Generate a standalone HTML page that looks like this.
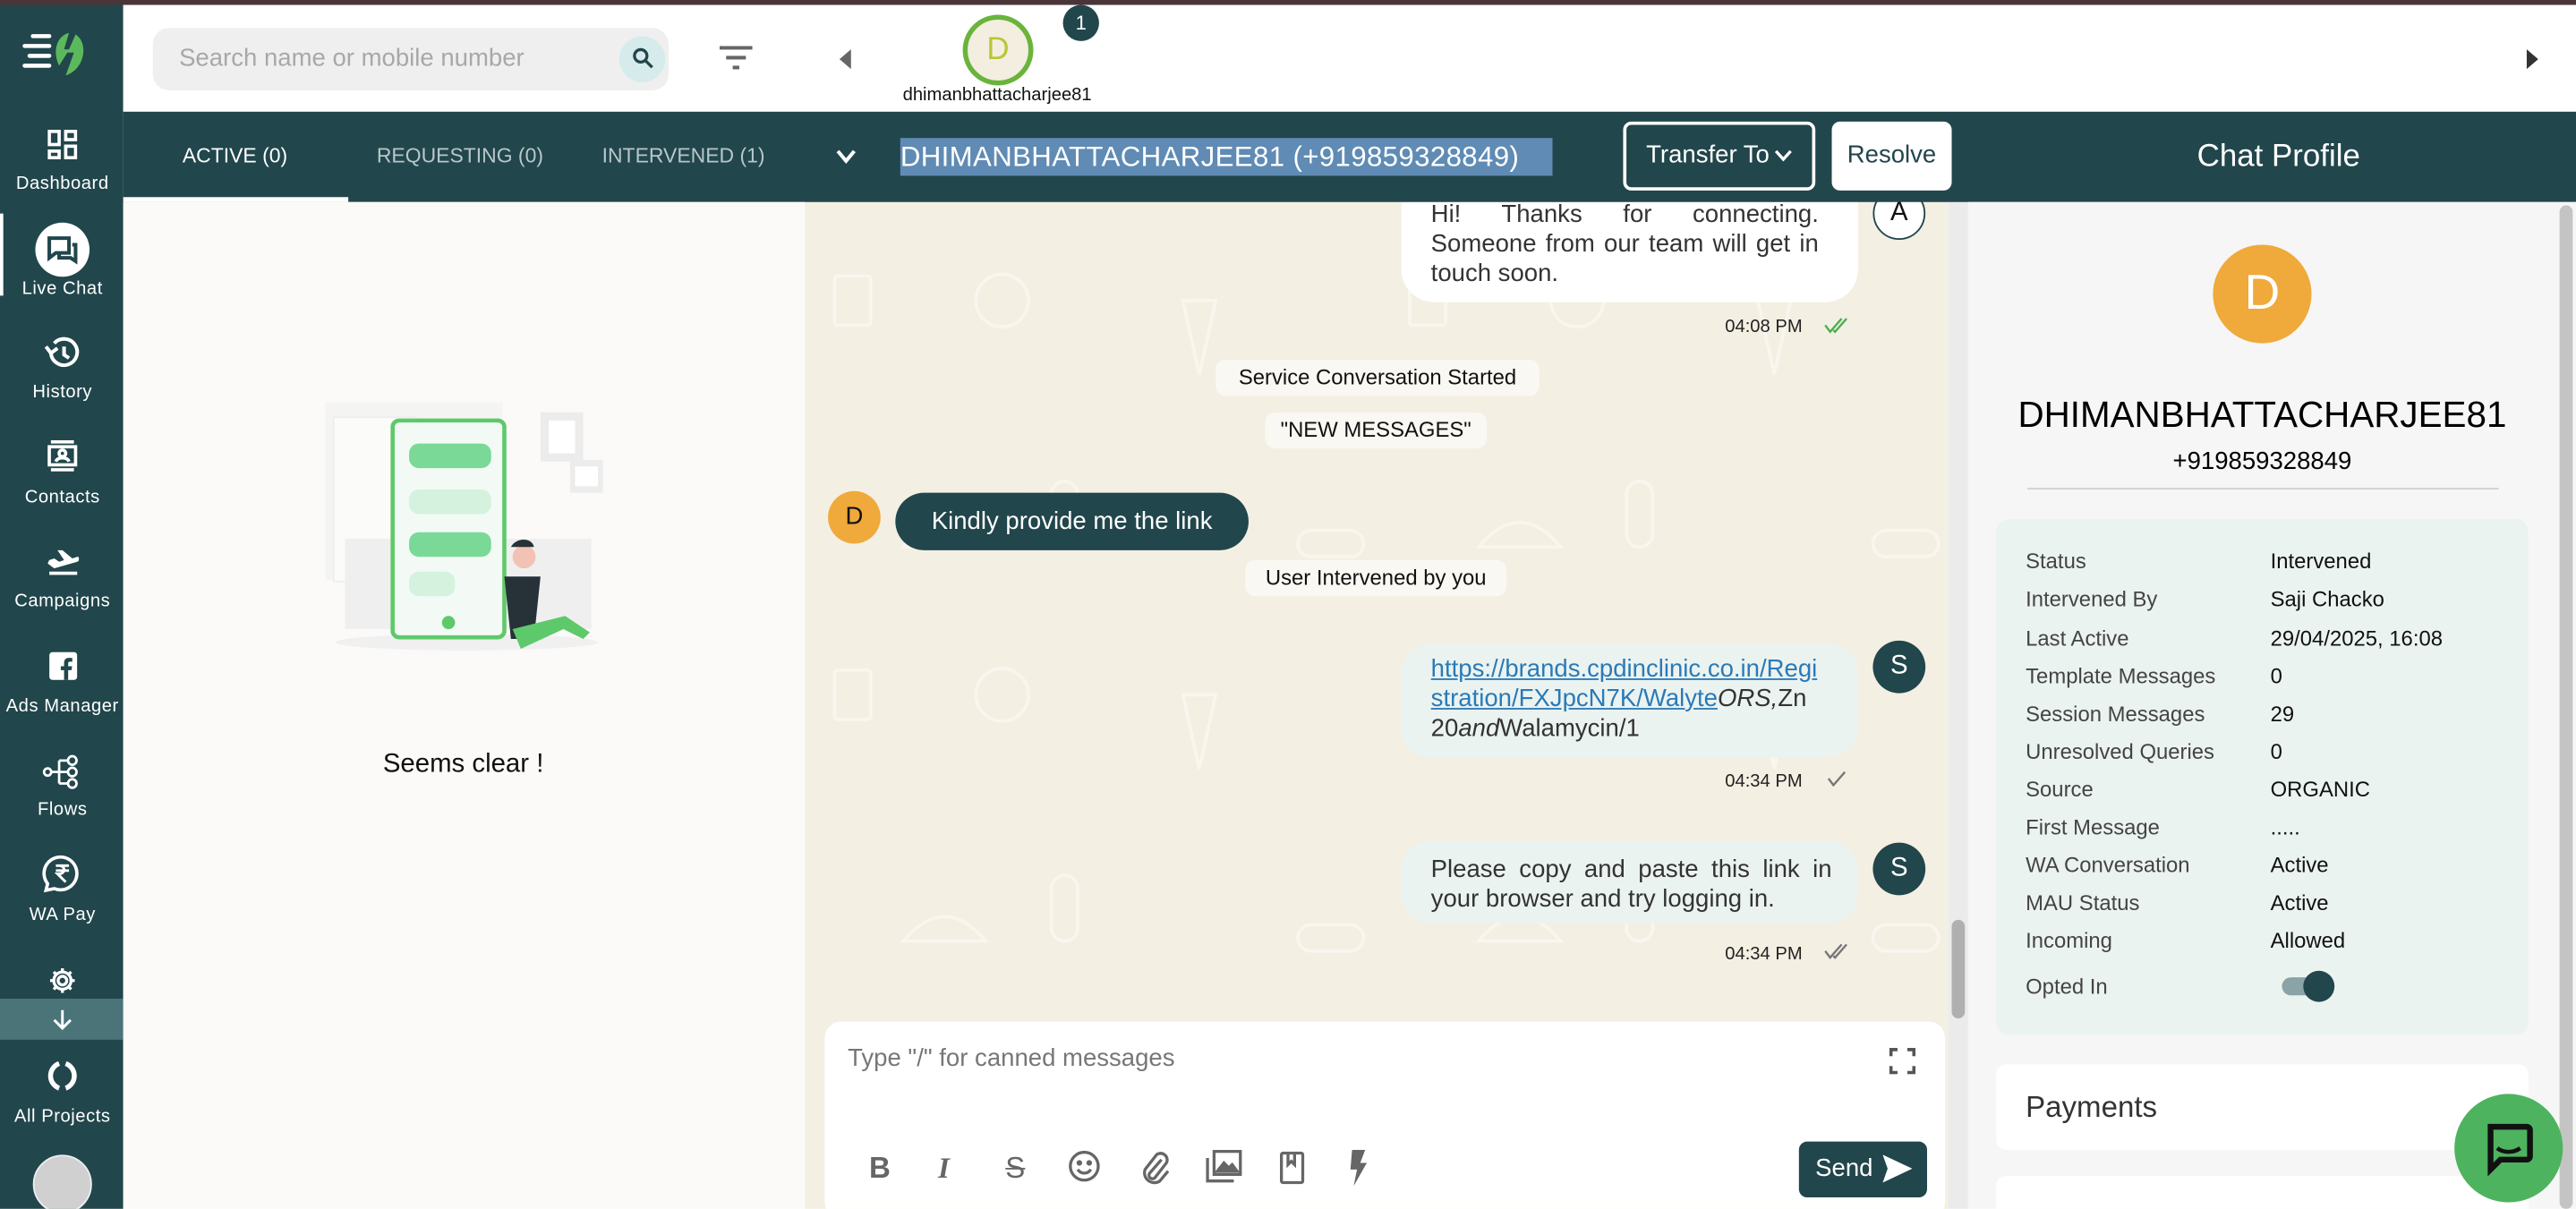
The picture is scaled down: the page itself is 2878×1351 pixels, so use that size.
<!DOCTYPE html>
<html><head><meta charset="utf-8"><style>
*{box-sizing:border-box;margin:0;padding:0}
html,body{width:2878px;height:1350px;overflow:hidden;background:#fff;font-family:"Liberation Sans",sans-serif}
#s{position:absolute;left:0;top:0;width:1568px;height:736px;transform:scale(1.83546);transform-origin:0 0;overflow:hidden}
.a{position:absolute}
.c{position:absolute;transform:translate(-50%,-50%);white-space:nowrap}
.nav{color:#fff;font-size:11px;letter-spacing:.3px}
.pill{position:absolute;background:#faf8f2;border-radius:6px;font-size:13px;color:#111;text-align:center;line-height:22px}
.row{position:absolute;left:1233px;font-size:13px;color:#444}
.val{position:absolute;left:1382px;font-size:13px;color:#111}
.time{position:absolute;font-size:11px;color:#222}
</style></head><body><div id="s">
<div class="a" style="left:0;top:0;width:1568px;height:3px;background:#4a3539"></div>
<!-- sidebar -->
<div class="a" style="left:0;top:3px;width:75px;height:733px;background:#21464c"></div>
<svg class="a" style="left:12px;top:18px" width="48" height="30" viewBox="0 0 48 30">
<g stroke="#fff" stroke-width="2.5" stroke-linecap="round"><line x1="8" y1="4" x2="18" y2="4"/><line x1="3" y1="10" x2="18" y2="10"/><line x1="6" y1="16" x2="18" y2="16"/><line x1="3" y1="22" x2="18" y2="22"/></g>
<path d="M30 2 C22 4 20 14 24 22 L29 14 L33 14 L28 28 C40 24 42 8 34 3 L30 12 L27 12 Z" fill="#5cb85c"/></svg>
<svg class="a" style="left:29px;top:79px" width="18" height="18" viewBox="0 0 18 18" fill="none" stroke="#fff" stroke-width="2"><rect x="1" y="1" width="6" height="8"/><rect x="11" y="1" width="6" height="5"/><rect x="1" y="13" width="6" height="4"/><rect x="11" y="10" width="6" height="7"/></svg>
<div class="c nav" style="left:38px;top:112px">Dashboard</div>
<div class="a" style="left:0;top:130px;width:2px;height:50px;background:#fff"></div>
<div class="c" style="left:38px;top:152px;width:33px;height:33px;border-radius:50%;background:#fff;transform:translate(-50%,-50%)"></div>
<svg class="a" style="left:28px;top:143px" width="20" height="18" viewBox="0 0 20 18" fill="none" stroke="#21464c" stroke-width="2.2"><path d="M2 2h12v9H6l-4 3z"/><path d="M16 6h2v10l-3-2H8v-3"/></svg>
<div class="c nav" style="left:38px;top:176px">Live Chat</div>
<svg class="a" style="left:27px;top:205px" width="22" height="20" viewBox="0 0 22 20" fill="none" stroke="#fff" stroke-width="2.2"><path d="M4 10a8 8 0 1 0 2-6"/><path d="M1 6l3 4 4-3"/><path d="M12 6v5l3 2"/></svg>
<div class="c nav" style="left:38px;top:239px">History</div>
<svg class="a" style="left:28px;top:268px" width="20" height="20" viewBox="0 0 20 20" fill="none" stroke="#fff" stroke-width="2"><line x1="3" y1="1" x2="17" y2="1"/><rect x="2" y="4" width="16" height="11"/><line x1="3" y1="18" x2="17" y2="18"/><circle cx="10" cy="8" r="2"/><path d="M6 13c1-3 7-3 8 0"/></svg>
<div class="c nav" style="left:38px;top:303px">Contacts</div>
<svg class="a" style="left:28px;top:333px" width="20" height="18" viewBox="0 0 20 18" fill="#fff"><path d="M2 8l3-1 3 2 3-1-4-6 3 0 6 5 3-1c2 0 2 2 0 3L5 13 1 10z"/><rect x="2" y="15" width="17" height="2"/></svg>
<div class="c nav" style="left:38px;top:366px">Campaigns</div>
<svg class="a" style="left:30px;top:397px" width="17" height="17" viewBox="0 0 17 17"><rect width="17" height="17" rx="2" fill="#fff"/><path d="M11.5 17v-6h2l.4-2.4h-2.4V7c0-.7.3-1.2 1.3-1.2H14V3.6c-.4 0-1.2-.1-2-.1-2 0-3 1.2-3 3.2v1.9H7V11h2v6z" fill="#21464c"/></svg>
<div class="c nav" style="left:38px;top:430px">Ads Manager</div>
<svg class="a" style="left:26px;top:459px" width="24" height="22" viewBox="0 0 24 22" fill="none" stroke="#fff" stroke-width="1.5"><circle cx="3" cy="11" r="2.2"/><line x1="5" y1="11" x2="10" y2="11"/><path d="M10 4v14M10 4h5M10 11h5M10 18h5"/><circle cx="18" cy="4" r="2.6"/><circle cx="18" cy="11" r="2.6"/><circle cx="18" cy="18" r="2.6"/></svg>
<div class="c nav" style="left:38px;top:493px">Flows</div>
<svg class="a" style="left:25px;top:520px" width="26" height="24" viewBox="0 0 26 24" fill="none" stroke="#fff" stroke-width="2"><path d="M4 18A10 10 0 1 1 8 21L3 22z"/><path d="M9 7h8M9 10h8M11 7c4 0 4 5 0 5h-1l5 5" stroke-width="1.6"/></svg>
<div class="c nav" style="left:38px;top:557px">WA Pay</div>
<svg class="a" style="left:29px;top:588px" width="18" height="18" viewBox="0 0 24 24" fill="none" stroke="#fff" stroke-width="2.4"><circle cx="12" cy="12" r="3.5"/><path d="M12 2v3M12 19v3M2 12h3M19 12h3M4.9 4.9l2.1 2.1M17 17l2.1 2.1M4.9 19.1L7 17M17 7l2.1-2.1"/><circle cx="12" cy="12" r="7"/></svg>
<div class="a" style="left:0;top:608px;width:75px;height:25px;background:#4b7479"></div>
<svg class="a" style="left:31px;top:614px" width="14" height="14" viewBox="0 0 14 14" fill="none" stroke="#fff" stroke-width="1.6"><path d="M7 1v11M2 7l5 5 5-5"/></svg>
<svg class="a" style="left:28px;top:645px" width="20" height="20" viewBox="0 0 20 20" fill="none" stroke="#fff" stroke-width="3"><path d="M8 2.5A8 8 0 0 0 8 17.5"/><path d="M12 2.5A8 8 0 0 1 12 17.5"/></svg>
<div class="c nav" style="left:38px;top:680px">All Projects</div>
<div class="a" style="left:20px;top:703px;width:36px;height:36px;border-radius:50%;background:#d0d0d0;border:1px solid #eee"></div>
<!-- chat area -->
<div class="a" style="left:490px;top:123px;width:696px;height:613px;background:#f4efe3"></div>
<svg class="a" style="left:490px;top:123px" width="696" height="500" viewBox="0 0 696 500" fill="none" stroke="#f9f6ee" stroke-width="2">
<g id="p"><rect x="18" y="45" width="22" height="30" rx="2"/><circle cx="120" cy="60" r="16"/><path d="M60 210q25-30 50 0z"/><rect x="150" y="170" width="16" height="40" rx="8"/><path d="M230 60l10 45 10-45z"/><rect x="300" y="200" width="40" height="16" rx="8"/></g>
<use href="#p" x="350"/><use href="#p" y="240"/><use href="#p" x="350" y="240"/></svg>
<div class="a" style="left:1186px;top:123px;width:12px;height:613px;background:#ebebeb"></div>
<div class="a" style="left:1188px;top:560px;width:8px;height:60px;border-radius:4px;background:#b0b0b0"></div>
<div class="a" style="left:853px;top:112px;width:278px;height:72px;background:#fff;border-radius:0 0 20px 20px"></div>
<div class="a" style="left:871px;top:122px;width:236px;font-size:15px;line-height:18px;color:#333;text-align:justify;text-align-last:left">Hi! Thanks for connecting. Someone from our team will get in touch soon.</div>
<div class="a" style="left:1140px;top:114px;width:32px;height:32px;border-radius:50%;background:#fff;border:1.5px solid #21464c;text-align:center;line-height:29px;font-size:16px;color:#111">A</div>
<div class="time" style="left:1050px;top:193px">04:08 PM</div>
<svg class="a" style="left:1110px;top:193px" width="16" height="10" viewBox="0 0 16 10" fill="none" stroke="#4caf50" stroke-width="1.3"><path d="M1 5l3 4 7-8M6 8l1 1 7-8"/></svg>
<div class="pill" style="left:740px;top:219px;width:197px">Service Conversation Started</div>
<div class="pill" style="left:770px;top:251px;width:135px">"NEW MESSAGES"</div>
<div class="a" style="left:504px;top:299px;width:32px;height:32px;border-radius:50%;background:#f0a93b;text-align:center;line-height:32px;font-size:15px;color:#111">D</div>
<div class="a" style="left:545px;top:300px;width:215px;height:35px;border-radius:18px;background:#21464c;color:#fff;font-size:15px;line-height:35px;text-align:center">Kindly provide me the link</div>
<div class="pill" style="left:758px;top:341px;width:159px">User Intervened by you</div>
<div class="a" style="left:853px;top:392px;width:278px;height:69px;background:#ebf3f0;border-radius:18px"></div>
<div class="a" style="left:871px;top:399px;width:236px;font-size:15px;line-height:18px;color:#333;word-break:break-all"><span style="color:#2a7ab8;text-decoration:underline">https://brands.cpdinclinic.co.in/Registration/FXJpcN7K/Walyte</span><i>ORS,</i>Zn20<i>and</i>Walamycin/1</div>
<div class="a" style="left:1140px;top:390px;width:32px;height:32px;border-radius:50%;background:#21464c;text-align:center;line-height:32px;font-size:16px;color:#fff">S</div>
<div class="time" style="left:1050px;top:470px">04:34 PM</div>
<svg class="a" style="left:1112px;top:469px" width="14" height="10" viewBox="0 0 14 10" fill="none" stroke="#777" stroke-width="1.3"><path d="M1 5l3 4 7-8"/></svg>
<div class="a" style="left:853px;top:512px;width:278px;height:50px;background:#ebf3f0;border-radius:18px"></div>
<div class="a" style="left:871px;top:521px;width:244px;font-size:15px;line-height:18px;color:#333;text-align:justify;text-align-last:left">Please copy and paste this link in your browser and try logging in.</div>
<div class="a" style="left:1140px;top:513px;width:32px;height:32px;border-radius:50%;background:#21464c;text-align:center;line-height:32px;font-size:16px;color:#fff">S</div>
<div class="time" style="left:1050px;top:575px">04:34 PM</div>
<svg class="a" style="left:1110px;top:574px" width="16" height="10" viewBox="0 0 16 10" fill="none" stroke="#777" stroke-width="1.3"><path d="M1 5l3 4 7-8M6 8l1 1 7-8"/></svg>
<!-- header -->
<div class="a" style="left:75px;top:3px;width:1493px;height:65px;background:#fff"></div>
<div class="a" style="left:93px;top:17px;width:314px;height:38px;border-radius:10px;background:#efeff0"></div>
<div class="a" style="left:109px;top:27px;font-size:15px;color:#a8a8a8">Search name or mobile number</div>
<div class="a" style="left:377px;top:22px;width:28px;height:28px;border-radius:50%;background:#d6ebeb"></div>
<svg class="a" style="left:385px;top:29px" width="13" height="13" viewBox="0 0 13 13" fill="none" stroke="#21464c" stroke-width="1.8"><circle cx="5" cy="5" r="3.8"/><path d="M8 8l4 4"/></svg>
<svg class="a" style="left:438px;top:28px" width="20" height="16" viewBox="0 0 20 16" fill="#666"><rect x="0" y="0" width="20" height="2.2"/><rect x="4" y="6" width="12" height="2.2"/><rect x="8" y="12" width="4" height="2.2"/></svg>
<svg class="a" style="left:511px;top:30px" width="8" height="12" viewBox="0 0 8 12"><path d="M7 0L0 6l7 6z" fill="#666"/></svg>
<div class="a" style="left:586px;top:9px;width:43px;height:43px;border-radius:50%;border:3px solid #6ab43c;background:#f3eee0;text-align:center;line-height:37px;font-size:19px;color:#b5c832">D</div>
<div class="a" style="left:647px;top:3px;width:22px;height:22px;border-radius:50%;background:#21464c;color:#fff;font-size:12px;text-align:center;line-height:22px">1</div>
<div class="c" style="left:607px;top:58px;font-size:11px;color:#111">dhimanbhattacharjee81</div>
<svg class="a" style="left:1537px;top:30px" width="8" height="12" viewBox="0 0 8 12"><path d="M1 0l7 6-7 6z" fill="#333"/></svg>
<!-- tab bar -->
<div class="a" style="left:75px;top:68px;width:1493px;height:55px;background:#21464c"></div>
<div class="c" style="left:143px;top:95px;font-size:12.5px;color:#fff">ACTIVE (0)</div>
<div class="a" style="left:75px;top:120px;width:137px;height:3px;background:#fff"></div>
<div class="c" style="left:280px;top:95px;font-size:12.5px;color:#b8c7c9">REQUESTING (0)</div>
<div class="c" style="left:416px;top:95px;font-size:12.5px;color:#b8c7c9">INTERVENED (1)</div>
<svg class="a" style="left:509px;top:91px" width="12" height="9" viewBox="0 0 12 9" fill="none" stroke="#fff" stroke-width="2.2"><path d="M1 1l5 6 5-6"/></svg>
<div class="a" style="left:548px;top:84px;width:397px;height:23px;background:#5f8bb4;color:#fff;font-size:17px;line-height:23px;white-space:nowrap;letter-spacing:.2px">DHIMANBHATTACHARJEE81 (+919859328849)</div>
<div class="a" style="left:988px;top:74px;width:117px;height:42px;border:2px solid #fff;border-radius:5px;color:#fff;font-size:15px;line-height:38px;padding-left:12px">Transfer To</div>
<svg class="a" style="left:1080px;top:91px" width="11" height="8" viewBox="0 0 11 8" fill="none" stroke="#fff" stroke-width="1.8"><path d="M1 1l4.5 5L10 1"/></svg>
<div class="a" style="left:1115px;top:74px;width:73px;height:42px;background:#fff;border-radius:5px;color:#21464c;font-size:15px;line-height:42px;text-align:center">Resolve</div>
<div class="c" style="left:1387px;top:96px;font-size:19px;color:#fff">Chat Profile</div>
<!-- left panel -->
<div class="a" style="left:75px;top:123px;width:415px;height:613px;background:#fbfaf8"></div>
<svg class="a" style="left:194px;top:233px" width="180" height="165" viewBox="0 0 180 165">
<rect x="4" y="12" width="108" height="108" fill="#f4f4f3"/><rect x="9" y="21" width="50" height="100" fill="#fbfbfa" stroke="#eee"/>
<rect x="135" y="18" width="26" height="30" fill="#ececec"/><rect x="140" y="23" width="16" height="20" fill="#fff"/>
<rect x="153" y="47" width="20" height="20" fill="#ececec"/><rect x="156" y="51" width="14" height="12" fill="#fff"/>
<rect x="16" y="95" width="150" height="55" fill="#efefef"/>
<ellipse cx="90" cy="158" rx="80" ry="5" fill="#f0f0f0"/>
<rect x="45" y="23" width="68" height="132" rx="4" fill="#f3faf5" stroke="#5ec96a" stroke-width="2.5"/>
<rect x="55" y="37" width="50" height="15" rx="6" fill="#7ad997"/><rect x="55" y="65" width="50" height="15" rx="6" fill="#d5f2de"/>
<rect x="55" y="91" width="50" height="15" rx="6" fill="#7ad997"/><rect x="55" y="115" width="28" height="15" rx="6" fill="#d5f2de"/>
<circle cx="79" cy="146" r="4" fill="#5ec96a"/>
<circle cx="125" cy="106" r="7" fill="#f2c2b4"/><path d="M117 100c3-6 13-6 14 0z" fill="#263238"/>
<path d="M113 118h22l-4 38h-14z" fill="#263238"/><path d="M118 150l32 -8 15 10-4 4-12-6-26 12z" fill="#5ec96a"/>
</svg>
<div class="c" style="left:282px;top:466px;font-size:16px;color:#111">Seems clear !</div>
<!-- composer -->
<div class="a" style="left:502px;top:622px;width:682px;height:120px;background:#fff;border-radius:10px"></div>
<div class="a" style="left:516px;top:636px;font-size:15px;color:#777">Type "/" for canned messages</div>
<svg class="a" style="left:1150px;top:638px" width="16" height="16" viewBox="0 0 16 16" fill="none" stroke="#555" stroke-width="2"><path d="M1 5V1h4M11 1h4v4M15 11v4h-4M5 15H1v-4"/></svg>
<div class="a" style="left:529px;top:701px;font-size:18px;font-weight:bold;color:#666">B</div>
<div class="a" style="left:571px;top:701px;font-size:18px;font-style:italic;font-family:'Liberation Serif',serif;font-weight:bold;color:#666">I</div>
<div class="a" style="left:612px;top:701px;font-size:18px;color:#666;text-decoration:line-through">S</div>
<svg class="a" style="left:650px;top:700px" width="20" height="20" viewBox="0 0 20 20" fill="none" stroke="#666" stroke-width="1.8"><circle cx="10" cy="10" r="8.5"/><circle cx="7" cy="8" r=".8" fill="#666"/><circle cx="13" cy="8" r=".8" fill="#666"/><path d="M6 12c2 3 6 3 8 0"/></svg>
<svg class="a" style="left:694px;top:700px" width="18" height="22" viewBox="0 0 18 22" fill="none" stroke="#666" stroke-width="1.8"><path d="M13 6l-7 8a2 2 0 0 0 3 3l7-9a4 4 0 0 0-6-5l-7 9a6 6 0 0 0 9 7l5-6"/></svg>
<svg class="a" style="left:734px;top:700px" width="22" height="20" viewBox="0 0 22 20" fill="none" stroke="#666" stroke-width="1.8"><path d="M1 5v14h16"/><rect x="5" y="1" width="16" height="14"/><path d="M7 13l4-5 3 3 2-2 3 4z" fill="#666"/></svg>
<svg class="a" style="left:779px;top:701px" width="15" height="20" viewBox="0 0 15 20" fill="none" stroke="#666" stroke-width="1.8"><rect x="1" y="1" width="13" height="18" rx="1"/><path d="M5 1v7l2-2 2 2V1"/></svg>
<svg class="a" style="left:821px;top:700px" width="12" height="22" viewBox="0 0 12 22" fill="#666"><path d="M2 0h8L7 8h4L3 22l2-10H1z"/></svg>
<div class="a" style="left:1095px;top:695px;width:78px;height:34px;border-radius:5px;background:#21464c;color:#fff;font-size:15px;line-height:34px;padding-left:10px">Send</div>
<svg class="a" style="left:1146px;top:703px" width="18" height="17" viewBox="0 0 18 17" fill="#fff"><path d="M0 0l18 8.5L0 17l3-8.5z"/></svg>
<!-- right panel -->
<div class="a" style="left:1198px;top:123px;width:370px;height:613px;background:#f6f6f6"></div>
<div class="a" style="left:1558px;top:125px;width:8px;height:611px;border-radius:4px;background:#c4c4c4"></div>
<div class="a" style="left:1347px;top:149px;width:60px;height:60px;border-radius:50%;background:#f0a93b;color:#fff;font-size:30px;text-align:center;line-height:60px">D</div>
<div class="c" style="left:1377px;top:253px;font-size:22px;color:#000">DHIMANBHATTACHARJEE81</div>
<div class="c" style="left:1377px;top:281px;font-size:15px;color:#000">+919859328849</div>
<div class="a" style="left:1234px;top:297px;width:287px;height:1px;background:#d0d0d0"></div>
<div class="a" style="left:1215px;top:316px;width:324px;height:314px;background:#ebf3f0;border-radius:8px"></div>
<div class="row" style="top:334px">Status</div><div class="val" style="top:334px">Intervened</div>
<div class="row" style="top:357px">Intervened By</div><div class="val" style="top:357px">Saji Chacko</div>
<div class="row" style="top:381px">Last Active</div><div class="val" style="top:381px">29/04/2025, 16:08</div>
<div class="row" style="top:404px">Template Messages</div><div class="val" style="top:404px">0</div>
<div class="row" style="top:427px">Session Messages</div><div class="val" style="top:427px">29</div>
<div class="row" style="top:450px">Unresolved Queries</div><div class="val" style="top:450px">0</div>
<div class="row" style="top:473px">Source</div><div class="val" style="top:473px">ORGANIC</div>
<div class="row" style="top:496px">First Message</div><div class="val" style="top:496px">.....</div>
<div class="row" style="top:519px">WA Conversation</div><div class="val" style="top:519px">Active</div>
<div class="row" style="top:542px">MAU Status</div><div class="val" style="top:542px">Active</div>
<div class="row" style="top:565px">Incoming</div><div class="val" style="top:565px">Allowed</div>
<div class="row" style="top:593px">Opted In</div>
<div class="a" style="left:1389px;top:595px;width:30px;height:11px;border-radius:6px;background:#8aa3a6"></div>
<div class="a" style="left:1402px;top:591px;width:19px;height:19px;border-radius:50%;background:#21464c"></div>
<div class="a" style="left:1215px;top:648px;width:324px;height:52px;background:#fff;border-radius:6px"></div>
<div class="a" style="left:1233px;top:664px;font-size:18px;color:#333">Payments</div>
<div class="a" style="left:1215px;top:716px;width:324px;height:30px;background:#fff;border-radius:6px"></div>
<div class="a" style="left:1494px;top:666px;width:66px;height:66px;border-radius:50%;background:#4db35f"></div>
<svg class="a" style="left:1510px;top:682px" width="34" height="34" viewBox="0 0 34 34" fill="none" stroke="#111" stroke-width="3.5"><path d="M6 4h22a2 2 0 0 1 2 2v16a2 2 0 0 1-2 2H12l-6 6z"/><path d="M10 17c4 3 10 3 14 0" stroke-width="2.5"/></svg>
</div></body></html>
